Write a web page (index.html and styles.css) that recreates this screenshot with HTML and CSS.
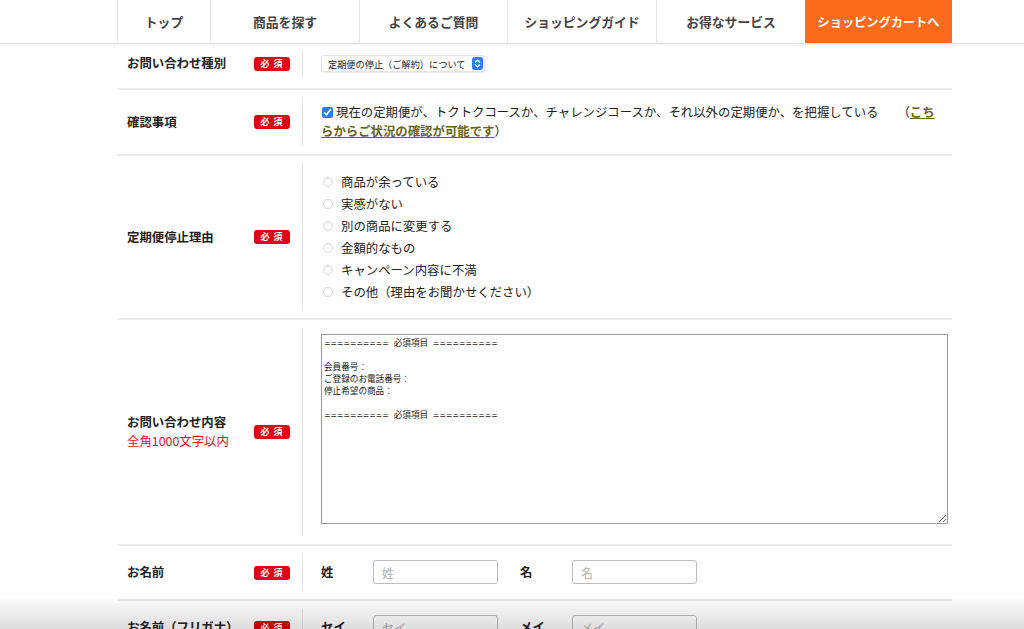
FILE: index.html
```html
<!DOCTYPE html>
<html lang="ja">
<head>
    <meta charset="UTF-8">
    <meta name="viewport" content="width=device-width, initial-scale=1.0">
    <title>お問い合わせ</title>
    <link rel="stylesheet" href="styles.css">
</head>
<body>
    <header class="gnav">
        <ul class="gnav-list">
            <li class="gnav-top"><a href="#">トップ</a></li>
            <li><a href="#">商品を探す</a></li>
            <li class="gnav-faq"><a href="#">よくあるご質問</a></li>
            <li><a href="#">ショッピングガイド</a></li>
            <li><a href="#">お得なサービス</a></li>
            <li class="gnav-cart"><a href="#">ショッピングカートへ</a></li>
        </ul>
    </header>

    <main class="contact">
        <div class="form-row row-type">
            <div class="form-head">
                <span class="head-label">お問い合わせ種別</span>
                <span class="badge">必 須</span>
            </div>
            <div class="form-body">
                <span class="select-wrap">
                    <select class="select" aria-label="お問い合わせ種別">
                        <option>定期便の停止（ご解約）について</option>
                    </select>
                    <svg class="select-arrow" width="11" height="13" viewBox="0 0 11 13">
                        <rect x="0" y="0" width="11" height="13" rx="3" fill="#2d7cf3"/>
                        <path d="M3.3 5.2 L5.5 3.2 L7.7 5.2" fill="none" stroke="#fff" stroke-width="1.3" stroke-linecap="round" stroke-linejoin="round"/>
                        <path d="M3.3 7.8 L5.5 9.8 L7.7 7.8" fill="none" stroke="#fff" stroke-width="1.3" stroke-linecap="round" stroke-linejoin="round"/>
                    </svg>
                </span>
            </div>
        </div>

        <div class="form-row row-confirm">
            <div class="form-head">
                <span class="head-label">確認事項</span>
                <span class="badge">必 須</span>
            </div>
            <div class="form-body">
                <p class="confirm-text">
                    <input type="checkbox" class="check" checked aria-label="確認">現在の定期便が、トクトクコースか、チャレンジコースか、それ以外の定期便か、を把握している<span class="confirm-gap"></span>（<a href="#" class="status-link">こち<br>らからご状況の確認が可能です</a>）
                </p>
            </div>
        </div>

        <div class="form-row row-reason">
            <div class="form-head">
                <span class="head-label">定期便停止理由</span>
                <span class="badge">必 須</span>
            </div>
            <div class="form-body">
                <ul class="radio-list">
                    <li><label><input type="radio" name="reason" class="radio">商品が余っている</label></li>
                    <li><label><input type="radio" name="reason" class="radio">実感がない</label></li>
                    <li><label><input type="radio" name="reason" class="radio">別の商品に変更する</label></li>
                    <li><label><input type="radio" name="reason" class="radio">金額的なもの</label></li>
                    <li><label><input type="radio" name="reason" class="radio">キャンペーン内容に不満</label></li>
                    <li><label><input type="radio" name="reason" class="radio">その他（理由をお聞かせください）</label></li>
                </ul>
            </div>
        </div>

        <div class="form-row row-message">
            <div class="form-head">
                <span class="head-label">お問い合わせ内容<br><span class="head-note">全角1000文字以内</span></span>
                <span class="badge">必 須</span>
            </div>
            <div class="form-body">
                <textarea class="message" aria-label="お問い合わせ内容">
==========  必須項目  ==========

会員番号：
ご登録のお電話番号：
停止希望の商品：

==========  必須項目  ==========</textarea>
            </div>
        </div>

        <div class="form-row row-name">
            <div class="form-head">
                <span class="head-label">お名前</span>
                <span class="badge">必 須</span>
            </div>
            <div class="form-body">
                <span class="name-label">姓</span>
                <input type="text" class="text-input" placeholder="姓">
                <span class="name-label">名</span>
                <input type="text" class="text-input" placeholder="名">
            </div>
        </div>

        <div class="form-row row-name">
            <div class="form-head">
                <span class="head-label">お名前（フリガナ）</span>
                <span class="badge">必 須</span>
            </div>
            <div class="form-body">
                <span class="name-label">セイ</span>
                <input type="text" class="text-input" placeholder="セイ">
                <span class="name-label">メイ</span>
                <input type="text" class="text-input" placeholder="メイ">
            </div>
        </div>
    </main>

    <div class="bottom-shade"></div>
</body>
</html>
```

FILE: styles.css
```css
body {
    margin: 0;
    padding: 0;
    background: #ffffff;
    color: #222;
    font-family: "Noto Sans CJK JP", "Noto Sans", sans-serif;
    font-size: 12.4px;
}
.gnav {
    background: #fff;
    border-bottom: 1px solid #e4e4e4;
    box-shadow: 0 1px 2px rgba(0,0,0,0.08);
}
.gnav-list {
    display: flex;
    list-style: none;
    margin: 0 0 0 117px;
    padding: 0;
    height: 43px;
}
.gnav-list li {
    width: 149px;
    border-left: 1px solid #e6e6e6;
    box-sizing: border-box;
}
.gnav-list li.gnav-top {
    width: 93px;
}
.gnav-list li.gnav-faq {
    width: 148px;
}
.gnav-list a {
    display: flex;
    align-items: center;
    justify-content: center;
    height: 100%;
    color: #444;
    font-weight: bold;
    font-size: 12.8px;
    text-decoration: none;
}
.gnav-list li.gnav-cart {
    width: 147px;
    background: #fc6a1c;
    border-left: none;
}
.gnav-list li.gnav-cart a {
    color: #fff;
    font-size: 12.2px;
}
.contact {
    width: 835px;
    margin-left: 117px;
    padding-top: 1px;
}
.form-row {
    display: flex;
    padding: 8px 0;
    border-bottom: 2px solid #ebebeb;
}
.form-head {
    width: 186px;
    flex-shrink: 0;
    box-sizing: border-box;
    display: flex;
    align-items: center;
    justify-content: space-between;
    padding: 0 12px 0 10px;
    border-right: 1px solid #e3e3e3;
}
.head-label {
    font-weight: bold;
    line-height: 19px;
    color: #222;
}
.head-note {
    font-weight: normal;
    color: #e3101c;
}
.badge {
    display: inline-block;
    width: 36px;
    height: 14px;
    line-height: 14px;
    border-radius: 3px;
    background: #e0000f;
    color: #fff;
    font-size: 9px;
    font-weight: bold;
    text-align: center;
    letter-spacing: 1px;
}
.form-body {
    flex: 1;
    display: flex;
    align-items: center;
    padding: 4px 4px 4px 18px;
}
.row-type {
    padding: 6px 0 12px;
}
.select-wrap {
    position: relative;
    display: inline-block;
    height: 17px;
}
.select {
    appearance: none;
    -webkit-appearance: none;
    display: block;
    width: 164px;
    height: 17px;
    padding: 0 0 0 6px;
    border: 1px solid #e4e4e4;
    border-radius: 3px;
    background: #fff;
    box-shadow: 0 1px 1px rgba(0,0,0,0.08);
    font-family: "Noto Sans CJK JP", sans-serif;
    font-size: 9.2px;
    color: #222;
}
.select-arrow {
    position: absolute;
    right: 2px;
    top: 2px;
}
.confirm-text {
    margin: 0;
    line-height: 19.5px;
    color: #222;
    padding: 0.5px 0;
}
.check {
    width: 11px;
    height: 11px;
    margin: 0 3px 0 1px;
    vertical-align: -1px;
    accent-color: #2d7cf3;
}
.confirm-gap {
    display: inline-block;
    width: 19px;
}
.status-link {
    color: #666614;
    font-weight: bold;
    text-decoration: underline;
}
.radio-list {
    list-style: none;
    margin: 0;
    padding: 3px 0;
}
.radio-list li {
    height: 22px;
    display: flex;
    align-items: center;
}
.radio-list label {
    display: flex;
    align-items: center;
    color: #222;
}
.radio {
    appearance: none;
    -webkit-appearance: none;
    width: 10px;
    height: 10px;
    margin: 0 8px 0 2px;
    border: 1px solid #d8d8d8;
    border-radius: 50%;
    background: #fff;
    box-shadow: inset 0 1px 1px rgba(0,0,0,0.05);
}
.row-message .form-body {
    padding: 6px 4px 12px 18px;
}
.message {
    width: 100%;
    height: 190px;
    box-sizing: border-box;
    margin: 0;
    padding: 2px 2px;
    border: 1px solid #9a9a9a;
    font-family: "DejaVu Sans Condensed", "Noto Sans CJK JP", sans-serif;
    font-size: 8.6px;
    line-height: 12px;
    color: #222;
    resize: vertical;
}
.row-name .form-body {
    padding: 6px 4px 7px 18px;
}
.name-label {
    width: 52px;
    font-weight: bold;
}
.text-input {
    width: 125px;
    height: 24px;
    box-sizing: border-box;
    margin-right: 22px;
    padding: 0 8px;
    border: 1px solid #bdbdbd;
    border-radius: 3px;
    font-family: "Noto Sans CJK JP", sans-serif;
    font-size: 12px;
}
.text-input::placeholder {
    color: #b0b0b0;
}
.bottom-shade {
    position: fixed;
    left: 0;
    right: 0;
    bottom: 0;
    height: 31px;
    background: linear-gradient(to bottom, rgba(0,0,0,0.015), rgba(0,0,0,0.13));
    pointer-events: none;
}
```
